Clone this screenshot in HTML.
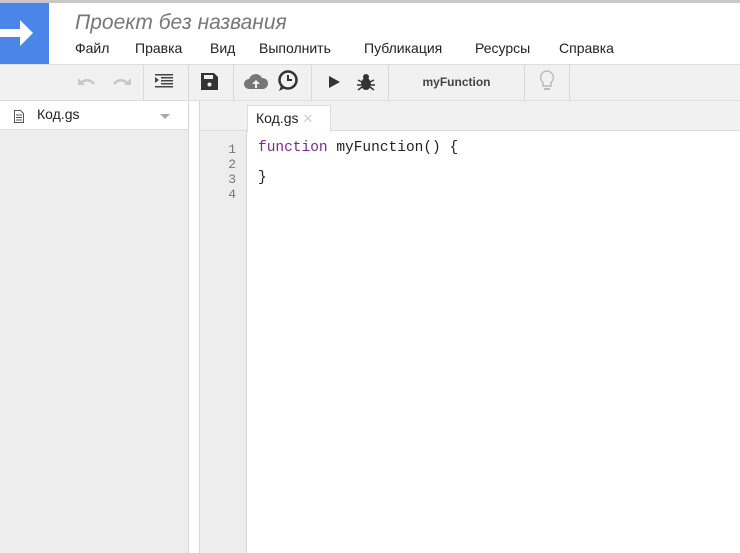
<!DOCTYPE html><html><head><meta charset="utf-8"><style>
*{margin:0;padding:0;box-sizing:border-box}
body{width:740px;height:553px;overflow:hidden;background:#fff;font-family:"Liberation Sans",sans-serif;position:relative}
.a{position:absolute}
.sep{position:absolute;top:65px;width:1px;height:35px;background:#d9d9d9}
</style></head><body>
<div class="a" style="left:0;top:0;width:740px;height:3px;background:#c8c8c8"></div>
<div class="a" style="left:0;top:3px;width:49px;height:61px;background:#4a86e8"></div>
<svg class="a" style="left:0;top:18px" width="36" height="30"><path d="M0 11h20V2l13 13-13 13v-9H0z" fill="#fff"/></svg>
<div class="a" style="left:75px;top:11px;font-size:21px;font-style:italic;color:#777">Проект без названия</div>
<div class="a" style="left:75px;top:40px;font-size:14px;color:#222;word-spacing:0">
<span style="position:absolute;left:0">Файл</span><span style="position:absolute;left:60px">Правка</span><span style="position:absolute;left:135px">Вид</span><span style="position:absolute;left:184px;white-space:nowrap">Выполнить</span><span style="position:absolute;left:289px;white-space:nowrap">Публикация</span><span style="position:absolute;left:400px">Ресурсы</span><span style="position:absolute;left:484px">Справка</span></div>
<div class="a" style="left:0;top:64px;width:740px;height:1px;background:#ddd"></div>
<div class="a" style="left:0;top:65px;width:740px;height:35px;background:#f1f1f1"></div>
<div class="a" style="left:0;top:100px;width:740px;height:1px;background:#ddd"></div>
<div class="sep" style="left:143px"></div><div class="sep" style="left:188px"></div><div class="sep" style="left:233px"></div><div class="sep" style="left:311px"></div><div class="sep" style="left:388px"></div><div class="sep" style="left:524px"></div><div class="sep" style="left:569px"></div>
<svg class="a" style="left:76px;top:73px" width="60" height="18"><path d="M4 11c4-5 10-5 14 0" stroke="#c8c8c8" stroke-width="2.5" fill="none"/><path d="M2 5v7h7z" fill="#c8c8c8"/><path d="M38 11c4-5 10-5 14 0" stroke="#c8c8c8" stroke-width="2.5" fill="none"/><path d="M55 5v7h-7z" fill="#c8c8c8"/></svg>
<svg class="a" style="left:155px;top:74px" width="20" height="14"><g fill="#444"><rect x="0" y="0" width="18" height="1.5"/><rect x="6" y="3" width="12" height="1.5"/><rect x="6" y="6" width="12" height="1.5"/><rect x="6" y="9" width="12" height="1.5"/><rect x="0" y="12" width="18" height="1.5"/><path d="M0 3l4 3-4 3z"/></g></svg>
<svg class="a" style="left:201px;top:73px" width="17" height="17"><path d="M0 0h13l4 4v13H0z" fill="#333"/><rect x="3" y="2" width="9" height="4" fill="#f1f1f1"/><circle cx="8.5" cy="11.5" r="2" fill="#f1f1f1"/></svg>
<svg class="a" style="left:243px;top:72px" width="26" height="20"><path d="M6 17a5 5 0 0 1 0-10 7 7 0 0 1 13-1 5.5 5.5 0 0 1 1 11z" fill="#777"/><path d="M13 8l-4 4h3v4h2v-4h3z" fill="#f1f1f1"/></svg>
<svg class="a" style="left:277px;top:70px" width="22" height="22"><circle cx="11" cy="10" r="8.5" stroke="#333" stroke-width="2.5" fill="none"/><path d="M4 16l-2 5 6-3" fill="#333"/><path d="M11 5v5h4" stroke="#333" stroke-width="2" fill="none"/></svg>
<svg class="a" style="left:328px;top:75px" width="14" height="14"><path d="M1 1l11 6-11 6z" fill="#333"/></svg>
<svg class="a" style="left:356px;top:72px" width="20" height="20"><ellipse cx="10" cy="12" rx="5" ry="6" fill="#333"/><circle cx="10" cy="5" r="3" fill="#333"/><path d="M2 8l4 2M18 8l-4 2M1 13h4M19 13h-4M2 18l4-3M18 18l-4-3" stroke="#333" stroke-width="1.5"/></svg>
<div class="a" style="left:389px;top:75px;width:135px;text-align:center;font-size:12px;font-weight:bold;color:#444">myFunction</div>
<svg class="a" style="left:538px;top:69px" width="18" height="24"><path d="M9 2a6.5 6.5 0 0 0-4 11.5V17h8v-3.5A6.5 6.5 0 0 0 9 2z" stroke="#bbb" stroke-width="1.5" fill="none"/><rect x="6" y="19" width="6" height="2" fill="#bbb"/></svg>
<div class="a" style="left:0;top:101px;width:188px;height:452px;background:#ededed"></div>
<div class="a" style="left:0;top:101px;width:188px;height:29px;background:#fff;border-bottom:1px solid #ddd"></div>
<svg class="a" style="left:14px;top:110px" width="10" height="13"><path d="M0.5 0.5h6l3 3v9h-9z" stroke="#555" fill="#fff"/><path d="M2 5h6M2 7.5h6M2 10h6" stroke="#555"/></svg>
<div class="a" style="left:37px;top:106px;font-size:14px;color:#222">Код.gs</div>
<svg class="a" style="left:160px;top:114px" width="10" height="6"><path d="M0 0h10L5 5z" fill="#aaa"/></svg>
<div class="a" style="left:188px;top:101px;width:1px;height:452px;background:#d6d6d6"></div>
<div class="a" style="left:199px;top:101px;width:1px;height:452px;background:#d6d6d6"></div>
<div class="a" style="left:200px;top:101px;width:540px;height:30px;background:#f1f1f1;border-bottom:1px solid #ddd"></div>
<div class="a" style="left:200px;top:131px;width:46px;height:422px;background:#ededed"></div>
<div class="a" style="left:246px;top:131px;width:1px;height:422px;background:#d6d6d6"></div>
<div class="a" style="left:247px;top:105px;width:84px;height:27px;background:#fff;border:1px solid #ddd;border-bottom:none"></div>
<div class="a" style="left:256px;top:110px;font-size:14px;color:#222">Код.gs <span style="color:#ccc;font-size:13px">✕</span></div>
<div class="a" style="left:200px;top:142px;width:36px;text-align:right;font-family:'Liberation Mono',monospace;font-size:13px;line-height:15px;color:#777">1<br>2<br>3<br>4</div>
<div class="a" style="left:258px;top:141px;font-family:'Liberation Mono',monospace;font-size:14.5px;line-height:15px;color:#222;white-space:pre"><span style="color:#7a2b8f">function</span> myFunction() {

}</div>
</body></html>
